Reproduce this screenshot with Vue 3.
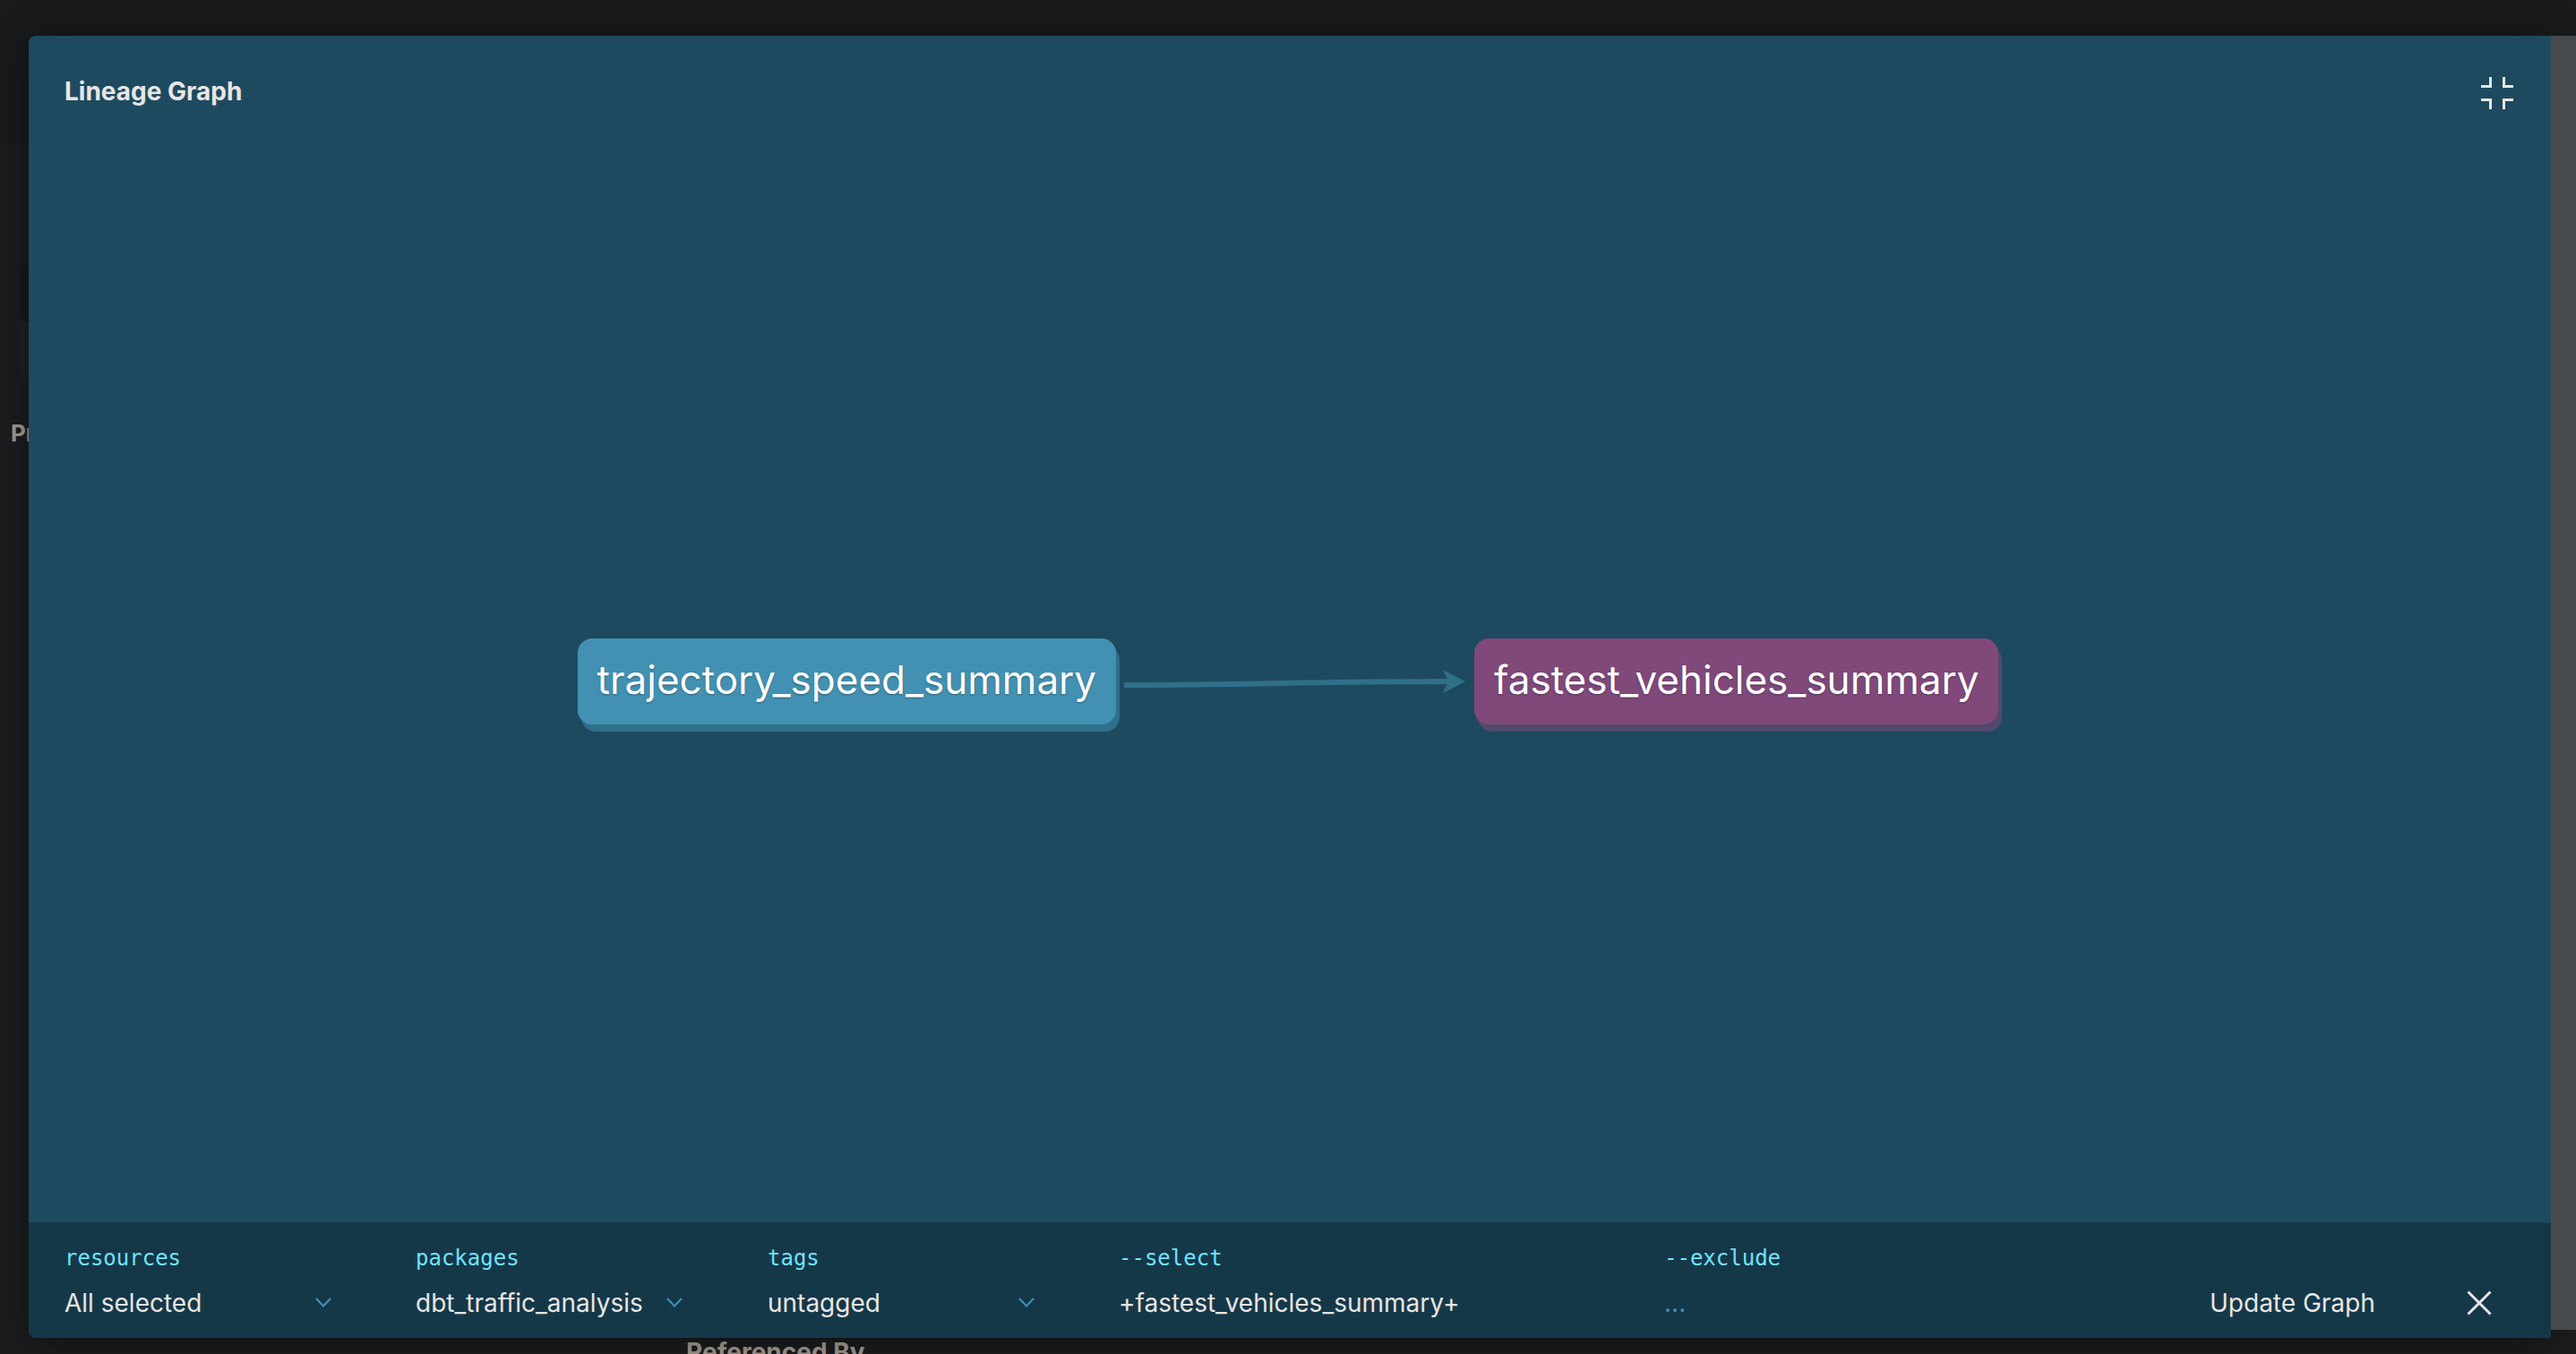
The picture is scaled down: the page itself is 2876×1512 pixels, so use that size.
<script setup>
import { ref } from 'vue'

const filters = [
  { id: 'resources', label: 'resources', value: 'All selected' },
  { id: 'packages', label: 'packages', value: 'dbt_traffic_analysis' },
  { id: 'tags', label: 'tags', value: 'untagged' },
]
const select = ref('+fastest_vehicles_summary+')
const exclude = ref('')
</script>

<template>
  <div class="page">
    <div class="backdrop" aria-hidden="true">
      <div class="topbar"></div>
      <div class="tabs">
        <div class="tab-head"></div>
      </div>
      <p class="behind-title">Pr</p>
      <p class="behind-footer">Referenced By</p>
    </div>

    <div class="overlay">
      <section class="modal">
        <header class="modal-header">
          <h1>Lineage Graph</h1>
          <button class="icon-button" type="button" aria-label="Exit full screen">
            <svg width="36" height="36" viewBox="0 0 36 36">
              <path
                d="M0 10.5H10.5V0M25.5 0V10.5H36M0 25.5H10.5V36M25.5 36V25.5H36"
                fill="none"
                stroke="currentColor"
                stroke-width="3"
              />
            </svg>
          </button>
        </header>

        <main class="canvas">
          <div class="node source">trajectory_speed_summary</div>
          <svg class="edge" width="400" height="96" viewBox="0 0 400 96">
            <path d="M9 52C130 52 220 48 371 48" fill="none" stroke="#2f6f8a" stroke-width="6" />
            <path d="M365 35L390 48L365 61L371 48Z" fill="#2f6f8a" />
          </svg>
          <div class="node current">fastest_vehicles_summary</div>
        </main>

        <footer class="toolbar">
          <div v-for="f in filters" :key="f.id" class="field">
            <label :for="f.id">{{ f.label }}</label>
            <div class="dropdown">
              <select :id="f.id">
                <option>{{ f.value }}</option>
              </select>
              <svg class="chevron" width="18" height="12" viewBox="0 0 18 12">
                <path d="M1 1L9 9.5L17 1" fill="none" stroke="#4391b2" stroke-width="2" />
              </svg>
            </div>
          </div>
          <div class="field">
            <label for="select">--select</label>
            <input id="select" v-model="select" type="text" />
          </div>
          <div class="field">
            <label for="exclude">--exclude</label>
            <input id="exclude" v-model="exclude" type="text" placeholder="..." />
          </div>
          <div class="actions">
            <button class="update" type="button">Update Graph</button>
            <button class="icon-button" type="button" aria-label="Close">
              <svg width="28" height="28" viewBox="0 0 28 28">
                <path
                  d="M1.5 1.5L26.5 26.5M26.5 1.5L1.5 26.5"
                  fill="none"
                  stroke="currentColor"
                  stroke-width="3"
                />
              </svg>
            </button>
          </div>
        </footer>
      </section>
      <div class="scrollbar"></div>
    </div>
  </div>
</template>

<style>
body {
  margin: 0;
  background: #1b1c1d;
}
</style>

<style scoped>
.page {
  position: relative;
  height: 100vh;
  overflow: hidden;
  font-family: Inter, "Liberation Sans", sans-serif;
  color: #e8e6e3;
}

.backdrop {
  display: flex;
  flex-direction: column;
  height: 100%;
  background: #1b1c1e;
  color: #a39b91;
}

.topbar {
  height: 160px;
  background: #191a1b;
}

.tabs {
  height: 128px;
  margin: 136px 0 0 22px;
  border-radius: 10px;
  background: #1f2022;
}

.tab-head {
  height: 64px;
  border-radius: 10px;
  background: #17181a;
}

.backdrop p {
  margin: 0;
  font-size: 28px;
  font-weight: 700;
  line-height: 32px;
}

.backdrop .behind-title {
  margin: 44px 0 0 12px;
  font-size: 26px;
}

.backdrop .behind-footer {
  margin: auto 0 -14px 766px;
}

.overlay {
  position: absolute;
  inset: 40px 0 18px 32px;
  display: flex;
}

.modal {
  flex: 1;
  display: flex;
  flex-direction: column;
  overflow: hidden;
  border-radius: 8px 0 0 8px;
  background: #1e4a60;
  box-shadow: 0 4px 40px rgba(0, 0, 0, 0.4);
}

.scrollbar {
  width: 28px;
  margin-bottom: 9px;
  background: #474a4c;
}

.modal-header {
  display: flex;
  align-items: center;
  justify-content: space-between;
  height: 36px;
  padding: 46px 42px 35px 40px;
}

h1 {
  margin: 0;
  padding-bottom: 4px;
  font-size: 28px;
  font-weight: 700;
  line-height: 32px;
}

button,
input,
select {
  margin: 0;
  padding: 0;
  border: 0;
  outline: 0;
  background: none;
  color: inherit;
  font: inherit;
  appearance: none;
}

.icon-button {
  display: flex;
}

.canvas {
  flex: 1;
  display: flex;
  align-items: center;
  justify-content: center;
  padding-right: 4px;
}

.node {
  box-sizing: border-box;
  height: 96px;
  padding: 0 22px;
  border-radius: 16px;
  color: #fff;
  font-size: 44px;
  line-height: 92px;
  white-space: nowrap;
}

.source {
  background: #4391b2;
  box-shadow: 4px 8px 0 #2f6f8a;
  text-shadow: 0 1px 2px #2a5f76;
}

.current {
  background: #80497a;
  box-shadow: 4px 8px 0 #52496d;
  text-shadow: 0 1px 2px #55305a;
}

.toolbar {
  display: grid;
  grid-template-columns: 392fr 393fr 392fr 609fr 609fr 341fr;
  height: 129px;
  padding: 0 40px;
  background: #153849;
  font-size: 28px;
}

.field {
  display: flex;
  flex-direction: column;
  gap: 12px;
  padding-top: 24px;
}

label {
  color: #72e3fa;
  font-family: "DejaVu Sans Mono", monospace;
  font-size: 24px;
  line-height: 32px;
}

.dropdown {
  display: flex;
  align-items: center;
  width: 298px;
}

select,
input {
  flex: 1;
  min-width: 0;
  height: 44px;
  line-height: 44px;
}

.field > input {
  flex: none;
}

input::placeholder {
  color: #4391b2;
  opacity: 1;
}

.actions {
  display: flex;
  align-items: center;
  justify-content: space-between;
  height: 44px;
  padding: 68px 26px 0 0;
}

.update {
  line-height: 44px;
}
</style>
